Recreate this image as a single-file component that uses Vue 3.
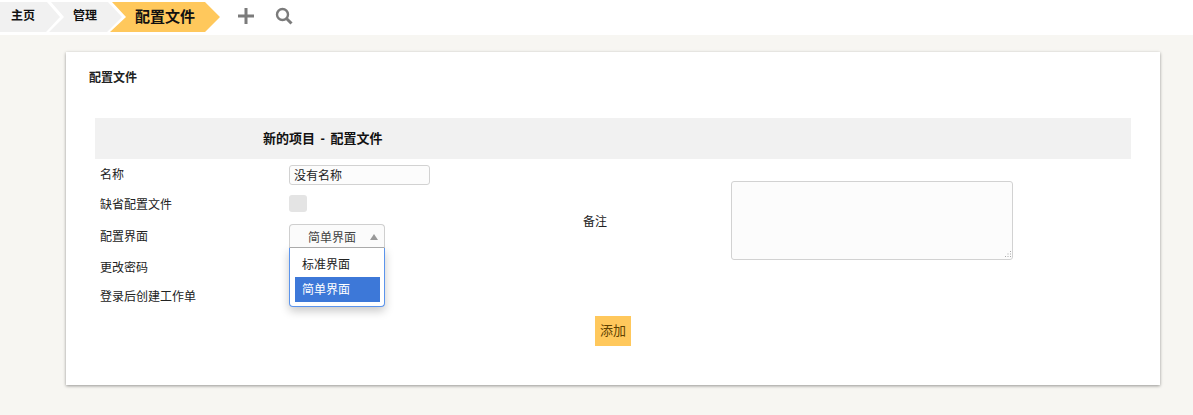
<script setup>
const crumbs = [
  { label: '主页', cls: 'first' },
  { label: '管理', cls: 'mid' },
  { label: '配置文件', cls: 'active' }
]
const fields = ['名称', '缺省配置文件', '配置界面', '更改密码', '登录后创建工作单']
</script>

<template>
  <div class="page">
    <header class="topbar">
      <nav class="crumbs">
        <a v-for="c in crumbs" :key="c.label" class="crumb" :class="c.cls">{{ c.label }}</a>
      </nav>
      <svg class="ico plus" width="18" height="18" viewBox="0 0 18 18"><path d="M9 1v16M1 9h16" stroke="#7b7b7b" stroke-width="3" fill="none"/></svg>
      <svg class="ico search" width="18" height="18" viewBox="0 0 18 18"><circle cx="7.5" cy="7.5" r="5.5" stroke="#7b7b7b" stroke-width="2.4" fill="none"/><path d="M11.5 11.5l5 5" stroke="#7b7b7b" stroke-width="3" fill="none"/></svg>
    </header>
    <main class="card">
      <h1 class="title">配置文件</h1>
      <div class="band"><span>新的项目 - 配置文件</span></div>
      <div class="form">
        <div class="labels">
          <div v-for="f in fields" :key="f" class="lbl">{{ f }}</div>
        </div>
        <div class="controls">
          <input class="text" value="没有名称" />
          <span class="check"></span>
          <div class="select">
            <div class="sel-head">简单界面<i class="arrow"></i></div>
            <div class="menu">
              <div class="opt">标准界面</div>
              <div class="opt on">简单界面</div>
            </div>
          </div>
        </div>
        <div class="note-label">备注</div>
        <div class="note-wrap">
          <textarea class="note"></textarea>
          <svg class="grip" width="9" height="9" viewBox="0 0 9 9"><path d="M7 1h1v1H7zM7 3.500h1v1H7zM4.500 3.500h1v1h-1zM7 6h1v1H7zM4.500 6h1v1h-1zM2 6h1v1H2z" fill="#a8a8a8"/></svg>
        </div>
      </div>
      <div class="actions"><button class="add">添加</button></div>
    </main>
  </div>
</template>

<style>
html, body { margin: 0; background: #f7f6f2; }
</style>

<style scoped>
.page {
  width: 1193px; height: 415px; overflow: hidden; background: #f7f6f2;
  font-family: "Liberation Sans", "Noto Sans CJK SC", sans-serif; font-size: 12px; color: #222;
}
.topbar { box-sizing: border-box; height: 35px; background: #fff; display: flex; align-items: flex-start; padding-top: 2px; }
.crumbs { display: flex; height: 30px; }
.crumb {
  height: 30px; line-height: 29px; font-weight: 700; font-size: 12px; color: #111; display: block; box-sizing: border-box;
}
.first { width: 60px; margin-right: -11px; padding-left: 11px; background: #f1f1f1;
  clip-path: polygon(0 0, 47px 0, 60px 15px, 46px 30px, 0 30px); }
.mid { width: 73px; margin-right: -12px; padding-left: 24px; background: #f1f1f1;
  clip-path: polygon(2px 0, 59px 0, 73px 15px, 58px 30px, 0 30px, 15px 15px); }
.active { width: 110px; padding-left: 25px; font-size: 15px; background: #ffc85c;
  clip-path: polygon(2px 0, 95px 0, 110px 15px, 95px 30px, 0 30px, 16px 15px); }
.ico { display: block; margin-top: 5px; }
.plus { margin-left: 17px; }
.search { margin-left: 20px; }
.card {
  box-sizing: border-box; width: 1094px; height: 333px; margin: 17px 0 0 66px; background: #fff; padding: 0 29px;
  box-shadow: 0 1px 3px rgba(0,0,0,.4); position: relative;
}
.title { margin: 0 0 0 -6px; padding-top: 18px; font-size: 12px; line-height: 16px; font-weight: 700; color: #222; }
.band {
  box-sizing: border-box; height: 41px; margin-top: 32px; padding: 0 0 2px 168px; background: #f1f1f1; display: flex; align-items: center;
  font-size: 13px; font-weight: 700; color: #111; word-spacing: 2px;
}
.form { position: relative; display: grid; grid-template-columns: 194px 294px 148px 282px; height: 157px; }
.labels { padding: 7px 0 0 5px; }
.lbl { height: 31px; line-height: 18px; }
.lbl:nth-child(1) { height: 30px; }
.lbl:nth-child(2) { height: 32px; }
.lbl:nth-child(3) { height: 31px; }
.lbl:nth-child(4) { height: 29px; }
.controls { padding-top: 6px; position: relative; }
.text {
  display: block; box-sizing: border-box; width: 141px; height: 20px; border: 1px solid #d2d2d2; border-radius: 3px;
  background: #fcfcfc; font: inherit; color: #222; padding: 0 4px 2px; outline: 0;
}
.check { display: block; width: 18px; height: 17px; margin-top: 10px; background: #e4e4e4; border-radius: 3px; }
.select { width: 96px; margin-top: 12px; position: relative; z-index: 2; }
.sel-head {
  box-sizing: border-box; height: 24px; border: 1px solid #cfcfcf; border-bottom-color: #aaa; border-radius: 4px 4px 0 0; padding: 1px 0 0 18px;
  line-height: 24px; position: relative; background: #fbfbfb; color: #444;
}
.arrow { position: absolute; right: 6px; top: 9px; border: 4px solid transparent; border-top: 0; border-bottom: 6px solid #999; }
.menu {
  box-sizing: border-box; height: 59px; border: 1px solid #5b94ec; border-top: 0; border-radius: 0 0 4px 4px; background: #fff;
  padding: 4px 4px 0 5px; box-shadow: 0 4px 10px rgba(0,0,0,.22);
}
.opt { box-sizing: border-box; height: 25px; line-height: 25px; padding: 1px 0 0 7px; color: #222; }
.opt.on { background: #3d78d8; color: #fff; }
.note-label { padding-top: 54px; line-height: 18px; color: #222; }
.note-wrap { position: relative; width: 282px; height: 79px; margin-top: 22px; }
.note {
  box-sizing: border-box; display: block; width: 282px; height: 79px; border: 1px solid #d2d2d2; border-radius: 3px;
  background: #fcfcfc; outline: 0; resize: none; margin: 0;
}
.grip { position: absolute; right: 1px; bottom: 1px; }
.actions { position: absolute; left: 529px; top: 264px; }
.add {
  display: block; box-sizing: border-box; width: 36px; height: 30px; border: 0; padding: 0 0 3px; background: #ffc85c; color: #5f4200; font: inherit; font-size: 13px; font-weight: 400;
}
</style>
